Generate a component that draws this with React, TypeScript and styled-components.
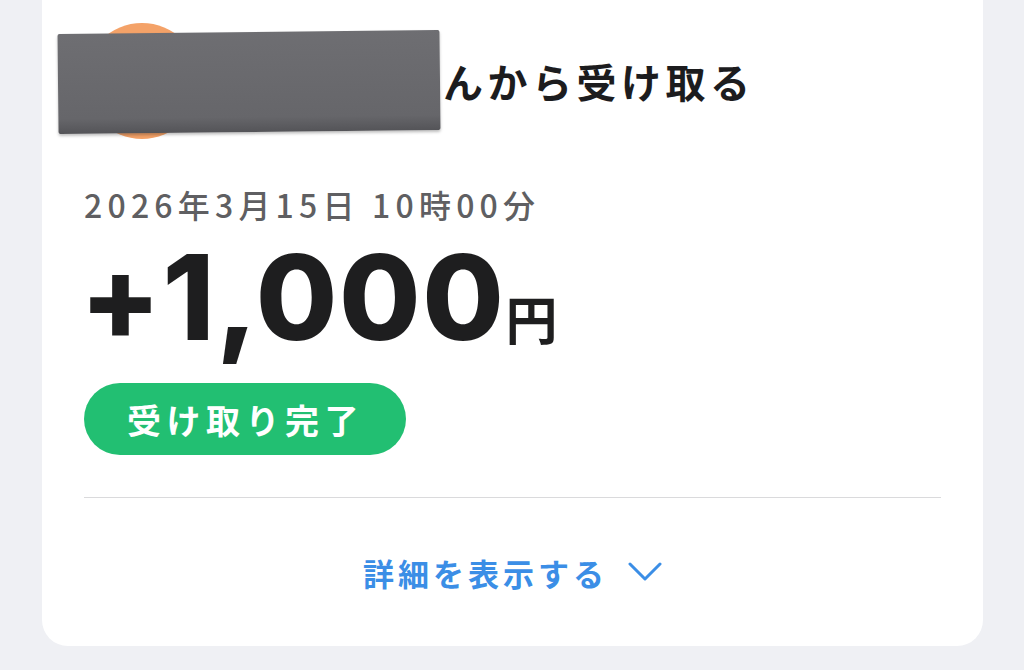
import React from "react";
import styled, { createGlobalStyle } from "styled-components";

const GlobalStyle = createGlobalStyle`
  html, body {
    margin: 0;
    padding: 0;
    background: #eff0f4;
    font-family: "Noto Sans", "Noto Sans CJK JP", sans-serif;
  }
  body {
    height: 670px;
    overflow: hidden;
  }
`;

const Page = styled.div`
  padding: 0 41px 0 42px;
`;

const Card = styled.div`
  background: #ffffff;
  border-radius: 0 0 26px 26px;
  padding: 23px 42px 0 42px;
  display: flex;
  flex-direction: column;
  align-items: flex-start;
`;

const Header = styled.div`
  position: relative;
  display: flex;
  align-items: center;
  gap: 16px;
  height: 116px;
`;

const Avatar = styled.div`
  width: 116px;
  height: 116px;
  border-radius: 50%;
  background: #f4a268;
`;

const SenderName = styled.span`
  display: inline-block;
  width: 227px;
`;

const Title = styled.h1`
  margin: 0;
  display: flex;
  align-items: center;
  font-family: "Noto Sans CJK JP", sans-serif;
  font-weight: 700;
  font-size: 40px;
  letter-spacing: 4.5px;
  color: #1c1c1e;
`;

// grey box hiding the sender's name in the screenshot
const Redaction = styled.div`
  position: absolute;
  left: -26px;
  top: 9px;
  width: 382px;
  height: 100px;
  background: linear-gradient(180deg, #6e6e72 0%, #66666a 85%, #545458 100%);
  border-radius: 2px;
  transform: rotate(-0.6deg);
  box-shadow: 0 2px 3px rgba(0, 0, 0, 0.25);
`;

const DateText = styled.div`
  margin-top: 49px;
  font-family: "Noto Sans CJK JP", sans-serif;
  font-size: 32px;
  line-height: 32px;
  letter-spacing: 5.2px;
  color: #5f5f62;
  font-weight: 500;
`;

const AmountRow = styled.div`
  margin-top: 17px;
  margin-left: -4px;
  display: flex;
  align-items: baseline;
  gap: 0;
  color: #1e1e1f;
`;

const Amount = styled.span`
  font-family: Inter, "Noto Sans", sans-serif;
  font-weight: 800;
  font-size: 118px;
  line-height: 120px;
  letter-spacing: 1.6px;
`;

const Yen = styled.span`
  font-family: "Noto Sans CJK JP", sans-serif;
  font-weight: 700;
  font-size: 52px;
`;

const StatusPill = styled.div`
  margin-top: 26px;
  height: 72px;
  padding: 0 42px 0 43px;
  border-radius: 36px;
  background: #22bf72;
  color: #ffffff;
  display: flex;
  align-items: center;
  font-family: "Noto Sans CJK JP", sans-serif;
  font-weight: 700;
  font-size: 34px;
  letter-spacing: 5.5px;
`;

const Divider = styled.hr`
  align-self: stretch;
  margin: 42px 0 0 0;
  border: none;
  border-top: 1px solid #dadadc;
`;

const DetailsButton = styled.button`
  align-self: stretch;
  height: 148px;
  border: none;
  background: none;
  padding: 0;
  display: flex;
  align-items: center;
  justify-content: center;
  gap: 20px;
  color: #3b8ee6;
  font-family: "Noto Sans CJK JP", sans-serif;
  font-weight: 700;
  font-size: 31px;
  letter-spacing: 4px;
  cursor: pointer;
`;

const Chevron = () => (
  <svg width="34" height="20" viewBox="0 0 34 20" fill="none">
    <polyline
      points="2,2 17,17 32,2"
      stroke="#3b8ee6"
      strokeWidth="3"
      strokeLinecap="round"
      strokeLinejoin="round"
    />
  </svg>
);

const App = () => {
  return (
    <>
      <GlobalStyle />
      <Page>
        <Card>
          <Header>
            <Avatar />
            <Title>
              <SenderName />
              んから受け取る
            </Title>
            <Redaction />
          </Header>
          <DateText>2026年3月15日 10時00分</DateText>
          <AmountRow>
            <Amount>+1,000</Amount>
            <Yen>円</Yen>
          </AmountRow>
          <StatusPill>受け取り完了</StatusPill>
          <Divider />
          <DetailsButton>
            詳細を表示する
            <Chevron />
          </DetailsButton>
        </Card>
      </Page>
    </>
  );
};

export default App;
